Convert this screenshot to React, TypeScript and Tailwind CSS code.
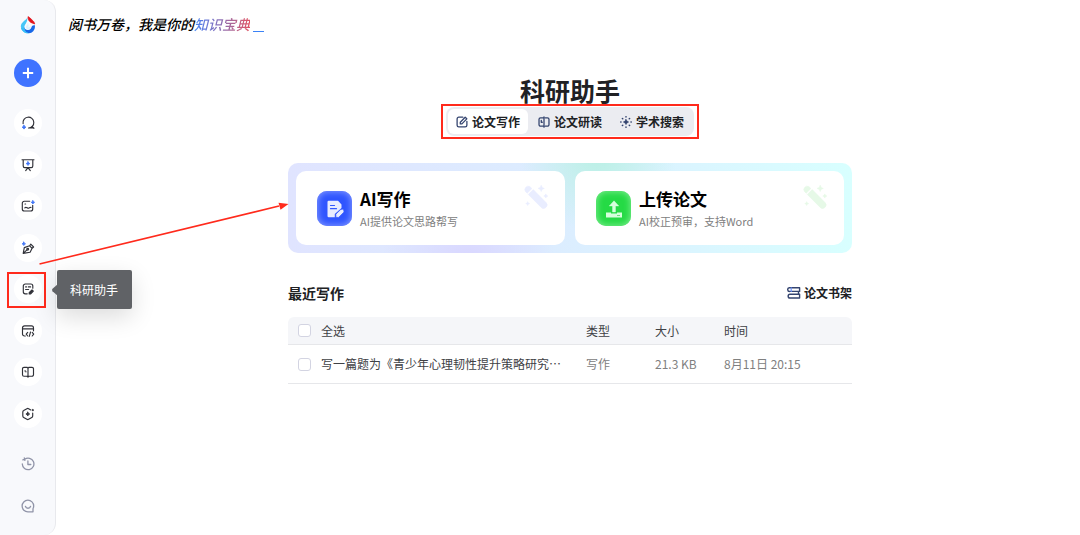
import type { ReactNode } from "react";

const ink = "#303138";
const blue = "#3f74f6";

function Svg({ children, className = "size-3.5", stroke = ink }: { children: ReactNode; className?: string; stroke?: string }) {
  return (
    <svg viewBox="0 0 14 14" className={className} fill="none" stroke={stroke} strokeWidth="1.15" strokeLinecap="round" strokeLinejoin="round" aria-hidden="true">
      {children}
    </svg>
  );
}

function Spark({ x, y, r, fill = blue }: { x: number; y: number; r: number; fill?: string }) {
  const k = r * 0.36;
  return (
    <path
      d={`M${x} ${y - r}L${x + k} ${y - k}L${x + r} ${y}L${x + k} ${y + k}L${x} ${y + r}L${x - k} ${y + k}L${x - r} ${y}L${x - k} ${y - k}Z`}
      fill={fill}
      stroke={fill}
      strokeWidth="0.8"
    />
  );
}

function Logo() {
  return (
    <svg viewBox="0 0 16 18" className="h-[18px] w-4" aria-hidden="true">
      <path d="M7.4 1.600C6.400 4.200.8 6.200.8 10.500a7 7 0 0 0 8.400 6.600C5.600 16.400 4.100 13.700 4.300 11.300 4.500 8.300 7.700 6.600 7.400 1.600Z" fill="#45c6f7" />
      <path d="M4 10.500C3.800 14.500 6.500 17.200 9 17.200a6.500 6.500 0 0 0 6-6.400c0-.8-.2-1.300-.4-1.900-.9.400-2.200.4-2.700 1.300-.8 2-1.600 3.900-4 3.900C5.700 14.100 4.200 12.600 4 10.500Z" fill="#1768e8" />
      <path d="M1 12c1 3.500 4.400 5.600 8 5.200-2.800-.5-4.500-2.200-4.800-5.700Z" fill="#38bdf8" />
      <path d="M8 .6c1.600.8 2.700 2 4 3.300C13.300 5 14.600 6.300 14.700 8c-1.400-.8-2.700-.8-3.900-1.600C8.900 5.300 7.900 3.200 8 .6Z" fill="#e3141d" stroke="#e3141d" strokeWidth=".7" />
      <path d="M7.700 6.800c.3 2.300-1.800 2.700-1.700 4.500 0 1.300.9 2 2 2 1.600 0 2.500-1.400 2.400-3.400-.7.700-1.200 1.300-2.100 1.400.5-1.500.3-3.300-.6-4.500Z" fill="#d7f1ff" />
    </svg>
  );
}

const navItems: { label: string; icon: ReactNode }[] = [
  {
    label: "AI搜索",
    icon: (
      <>
        <path d="M2.100 7.600A5.400 5.400 0 1 1 7.500 12H12.900M10.900 10.500 12.900 12.300" />
        <Spark x={3} y={11.200} r={1.900} />
      </>
    ),
  },
  {
    label: "AI PPT",
    icon: (
      <>
        <path d="M1 1.700H13M2.200 1.700V8a1.600 1.600 0 0 0 1.600 1.600H10.200A1.600 1.600 0 0 0 11.800 8V1.700M7 9.600 4.700 12.600M7 9.600 9.300 12.600" />
        <Spark x={7} y={5.600} r={1.900} />
      </>
    ),
  },
  {
    label: "AI绘图",
    icon: (
      <>
        <path d="M8.700 2.200H3.300A2 2 0 0 0 1.300 4.200V10a2 2 0 0 0 2 2H9.700a2 2 0 0 0 2-2V6.300M3.800 8.900C5.300 7.100 6.400 9.700 7.600 9.200 8.700 8.700 9.300 7.900 10 8.500M4 5H4.600" />
        <Spark x={11.900} y={3.300} r={1.700} />
      </>
    ),
  },
  {
    label: "AI写作",
    icon: (
      <>
        <path d="M2.200 12.400 3.300 6.600 8.600 4.800 11.100 7.300 9.100 11.200 2.200 12.400 6.200 8.700M8.600 4.800 9.800 3.200 12.600 6 11.100 7.300" />
        <circle cx="6.700" cy="8.300" r=".9" />
        <Spark x={2.800} y={2.800} r={1.700} />
      </>
    ),
  },
  {
    label: "科研助手",
    icon: (
      <>
        <path d="M6.200 11.800H4.300a2 2 0 0 1-2-2V4a2 2 0 0 1 2-2H9.800a2 2 0 0 1 2 2V6.200M4.600 4.900H5.500M7.300 4.900H9.600M4.600 7.500H7.600" />
        <path d="M8.200 12V10.600L11 7.800 12.300 9.100 9.500 12Z" fill={ink} />
      </>
    ),
  },
  {
    label: "AI编程",
    icon: (
      <path d="M4.300 12H3.500a2 2 0 0 1-2-2V3.900a2 2 0 0 1 2-2H10.500a2 2 0 0 1 2 2V6.800M1.700 4.900H12.300M6.700 8.400 5.200 10.200 6.700 12M9.500 8 8.300 12.300M11.200 8.400 12.700 10.200 11.200 12" />
    ),
  },
  {
    label: "AI阅读",
    icon: (
      <>
        <path d="M7 3.200 6 2.300H3A1.500 1.500 0 0 0 1.500 3.800V9.700A1.500 1.500 0 0 0 3 11.200H6L7 12.100 8 11.200H11A1.500 1.500 0 0 0 12.500 9.700V3.800A1.500 1.500 0 0 0 11 2.300H8L7 3.200V12.100" />
        <path d="M4.100 5.400V6.800H5.200" strokeWidth=".9" />
      </>
    ),
  },
  {
    label: "智能体",
    icon: (
      <>
        <path d="M9.800 3 7.600 1.700a1.700 1.700 0 0 0-1.700 0L2.700 3.500A1.700 1.700 0 0 0 1.800 5V9a1.700 1.700 0 0 0 .9 1.500L5.900 12.300a1.700 1.700 0 0 0 1.700 0L10.800 10.500A1.700 1.700 0 0 0 11.700 9V6" />
        <Spark x={6.800} y={7} r={1.900} fill={ink} />
        <Spark x={11.800} y={3.200} r={0.900} fill={ink} />
      </>
    ),
  },
];

function Sidebar() {
  return (
    <aside className="flex h-screen w-14 shrink-0 flex-col items-center rounded-r-xl border-r border-[#e8e9ed] bg-[#f8f9fc] pt-4">
      <Logo />
      <button aria-label="新建" className="mt-[25px] flex size-7 shrink-0 items-center justify-center rounded-full bg-[#3f73ff]">
        <svg viewBox="0 0 12 12" className="size-3" stroke="#fff" strokeWidth="2" aria-hidden="true">
          <path d="M6 .8V11.200M.8 6H11.200" />
        </svg>
      </button>
      <nav className="mt-[22px] flex h-[319px] shrink-0 flex-col justify-between">
        {navItems.map((item) => (
          <div key={item.label} className="relative">
            <button aria-label={item.label} className="flex size-7 items-center justify-center rounded-full bg-white">
              <Svg>{item.icon}</Svg>
            </button>
            {item.label === "科研助手" && (
              <>
                <div className="absolute -top-[3px] -left-[7px] z-10 h-9 w-[39px] border-2 border-[#ff2a1c]" />
                <div role="tooltip" className="absolute -top-[5px] left-[43px] z-10 flex h-[39px] w-[75px] items-center justify-center rounded-xs bg-[#606266] text-xs text-white shadow-[0_8px_24px_rgba(0,0,0,0.14)]">
                  <svg viewBox="0 0 6 12" className="absolute top-[14px] -left-[5px] h-3 w-[6px]" aria-hidden="true">
                    <path d="M6 0V12L.5 7.200Q-.3 6 .5 4.800Z" fill="#606266" />
                  </svg>
                  科研助手
                </div>
              </>
            )}
          </div>
        ))}
      </nav>
      <div className="mt-[29px] flex flex-col gap-7">
        <button aria-label="历史记录">
          <Svg stroke="#9094a8">
            <path d="M1.300 7A5.800 5.800 0 1 0 3.700 2.200L1.900 2.900M3.300.9 3.900 3.400M6.900 4V7.500H9.800" strokeWidth="1.300" />
          </Svg>
        </button>
        <button aria-label="反馈">
          <Svg stroke="#9094a8">
            <path d="M12.700 7A5.800 5.800 0 1 0 7 12.800H12V9.800A5.800 5.800 0 0 0 12.700 7ZM4.400 7.300A2.700 2.700 0 0 0 9.600 7.300" strokeWidth="1.300" />
          </Svg>
        </button>
      </div>
    </aside>
  );
}

const navy = "#34446f";

const tabs: { label: string; icon: ReactNode }[] = [
  {
    label: "论文写作",
    icon: <path d="M8 1.400H3.300a2 2 0 0 0-2 2V10.700a2 2 0 0 0 2 2H10.700a2 2 0 0 0 2-2V6.200M5 9.200V7.200L10.700 1.500 12.600 3.300 6.900 9.200Z" strokeWidth="1.500" />,
  },
  {
    label: "论文研读",
    icon: <path d="M7 1V13M6 2.100H3A1.800 1.800 0 0 0 1.200 3.900V10.100A1.800 1.800 0 0 0 3 11.900H6M8.500 2.100H11A1.800 1.800 0 0 1 12.800 3.900V10.100A1.800 1.800 0 0 1 11 11.900H8.500M3.800 5V7.300H5" strokeWidth="1.500" />,
  },
  {
    label: "学术搜索",
    icon: (
      <>
        <Spark x={7} y={7} r={3} fill={navy} />
        <path d="M7 .8V1.200M7 12.800V13.200M.8 7H1.200M12.800 7H13.200M2.800 2.800 3.200 3.200M10.800 10.800 11.200 11.200M11.200 2.800 10.800 3.200M3.200 10.800 2.800 11.200" strokeWidth="1.700" />
      </>
    ),
  },
];

function Wand({ className }: { className: string }) {
  return (
    <svg viewBox="0 0 24 24" className={className} fill="currentColor" aria-hidden="true">
      <path d="M1.200 6.200A3.500 3.500 0 0 1 5.800 1.500L7.900 3.500 3.200 8.200Z" stroke="currentColor" strokeWidth=".6" strokeLinejoin="round" />
      <path d="M4.300 9.500 9.200 4.600 22 17.500A3.400 3.400 0 0 1 17.200 22.400Z" stroke="currentColor" strokeWidth=".6" strokeLinejoin="round" />
      <path d="M17.200.2 18.200 2.400 20.400 3.400 18.200 4.400 17.200 6.600 16.200 4.400 14 3.400 16.200 2.400ZM21.800 8.900 22.500 10.300 23.900 11 22.500 11.700 21.800 13.100 21.100 11.700 19.700 11 21.100 10.300ZM3.700 16.600 4.300 18 5.700 18.600 4.300 19.200 3.700 20.600 3.100 19.200 1.700 18.600 3.100 18Z" stroke="currentColor" strokeWidth=".5" />
    </svg>
  );
}

function ActionCard({ title, text, icon, wand }: { title: string; text: string; icon: ReactNode; wand: string }) {
  return (
    <button className="flex h-[74px] flex-1 items-start rounded-[10px] bg-white pr-[17px] pl-[21px] text-left">
      {icon}
      <span className="mt-4 ml-2 flex flex-col">
        <span className="text-[17px] leading-6 font-bold text-black">{title}</span>
        <span className="mt-px text-[11px] leading-[18px] text-[#808080]">{text}</span>
      </span>
      <Wand className={wand} />
    </button>
  );
}

function WriteIcon() {
  return (
    <span className="mt-5 flex size-[35px] shrink-0 items-center justify-center rounded-[10px] bg-[#2f55ff] shadow-[inset_0_0_6px_1px_#8298ff]">
      <svg viewBox="0 0 18 18" className="size-[18px]" aria-hidden="true">
        <path d="M1.500 2A1.200 1.200 0 0 1 2.700.8H12L15.500 4.500V8L8.800 14V17.200H2.700A1.200 1.200 0 0 1 1.500 16Z" fill="#e8ecff" />
        <path d="M4.500 5.500H8.500M4.500 8.700H10.500" stroke="#3157ff" strokeWidth="1.200" strokeLinecap="round" />
        <path d="M9.800 17.400V14.200L14.600 9.600Q16.300 8.400 17.600 9.800 18.600 11.300 17.400 12.700L12.700 17.400Z" fill="#e8ecff" stroke="#3157ff" strokeWidth=".8" />
      </svg>
    </span>
  );
}

function UploadIcon() {
  return (
    <span className="mt-5 flex size-[35px] shrink-0 items-center justify-center rounded-[10px] bg-[#25da45] shadow-[inset_0_0_6px_1px_#79eb8c]">
      <svg viewBox="0 0 18 18" className="size-[18px]" fill="#d5ffdc" aria-hidden="true">
        <path d="M9 .8 13.800 6H10.500V12H7.500V6H4.200Z" stroke="#d5ffdc" strokeWidth=".4" strokeLinejoin="round" />
        <path d="M1 12.500H6V13.500H12V12.500H17V17.500H1Z" />
        <path d="M12 15.500H15" stroke="#6be27f" strokeWidth="1" />
      </svg>
    </span>
  );
}

const boxClass = "block size-[13px] appearance-none rounded-[3px] border border-[#d3d4e2] bg-white checked:bg-[#3f73ff]";

function FileTable() {
  return (
    <table className="mt-[14px] w-full table-fixed border-separate border-spacing-0 text-left text-xs">
      <colgroup>
        <col className="w-[33px]" />
        <col />
        <col className="w-[69px]" />
        <col className="w-[69px]" />
        <col className="w-32" />
      </colgroup>
      <thead>
        <tr className="h-7 text-[#404145] [&>th]:border-b [&>th]:border-[#e6e7ea] [&>th]:bg-[#f5f6f9] [&>th]:p-0 [&>th]:font-normal">
          <th className="rounded-tl-md">
            <input id="select-all" type="checkbox" className={`${boxClass} ml-[10px]`} />
          </th>
          <th>
            <label htmlFor="select-all">全选</label>
          </th>
          <th>类型</th>
          <th>大小</th>
          <th className="rounded-tr-md">时间</th>
        </tr>
      </thead>
      <tbody>
        <tr className="h-[39px] text-[#808080] [&>td]:border-b [&>td]:border-[#e6e7ea] [&>td]:p-0">
          <td>
            <input id="file-1" type="checkbox" className={`${boxClass} ml-[10px]`} />
          </td>
          <td className="whitespace-nowrap text-[#404145]">
            <label htmlFor="file-1">写一篇题为《青少年心理韧性提升策略研究…</label>
          </td>
          <td>写作</td>
          <td>21.3 KB</td>
          <td>8月11日 20:15</td>
        </tr>
      </tbody>
    </table>
  );
}

export default function App() {
  return (
    <div lang="zh-CN" className="relative flex min-h-screen bg-white font-['Noto_Sans_CJK_SC',sans-serif] text-[#202124]">
      <Sidebar />
      <main className="min-w-0 flex-1 pt-[14px]">
        <p className="pl-3 text-sm leading-5 font-medium text-black italic">
          阅书万卷，我是你的
          <span className="bg-linear-to-r from-[#3b82f6] via-[#8d6bb0] to-[#e05263] bg-clip-text text-transparent">知识宝典</span>
          <span className="ml-[3px] inline-block h-px w-[11px] bg-[#3b82f6] align-[-2px]" />
        </p>
        <div className="pl-1">
          <div className="mx-auto flex max-w-[564px] flex-col">
            <h1 className="mt-10 mb-px text-center text-[25px] leading-8 font-bold">科研助手</h1>
            <div className="relative flex gap-[2px] self-center rounded-lg bg-[#ebecf1] p-[2px]" role="tablist">
              {tabs.map((tab, i) => (
                <button
                  key={tab.label}
                  role="tab"
                  aria-selected={i === 0}
                  className={`flex h-[25px] items-center gap-1 rounded-md px-2 text-xs font-bold ${i === 0 ? "bg-white" : ""}`}
                >
                  <Svg className="size-3" stroke={navy}>{tab.icon}</Svg>
                  {tab.label}
                </button>
              ))}
              <div className="pointer-events-none absolute -inset-x-[5px] -inset-y-[3px] border-2 border-[#ff2a1c]" />
            </div>
            <section className="mt-[27px] flex gap-[10px] rounded-[10px] bg-[radial-gradient(circle_at_32%_110%,#d9d6ff_0%,#d9d6ff00_22%),radial-gradient(circle_at_55%_-10%,#b9f0e4_0%,#b9f0e400_24%),linear-gradient(90deg,#e0e4ff,#dcecff_45%,#d8ffff)] p-2">
              <ActionCard title="AI写作" text="AI提供论文思路帮写" icon={<WriteIcon />} wand="mt-[14px] ml-auto size-6 text-[#e9edff]" />
              <ActionCard title="上传论文" text="AI校正预审，支持Word" icon={<UploadIcon />} wand="mt-[14px] ml-auto size-6 text-[#e6f9e7]" />
            </section>
            <div className="mt-[30px] flex items-center justify-between">
              <h2 className="text-sm leading-5 font-bold">最近写作</h2>
              <a href="#shelf" className="flex items-center gap-[3px] text-xs leading-5 font-bold">
                <Svg className="size-3.5" stroke="#34446f">
                  <path d="M2.300 1.800H12.600V5.400H2.800A1.700 1.700 0 0 1 2.300 1.800ZM3 8.300H12.600V12H3A1.700 1.700 0 0 1 3 8.300ZM11.500 5.600V8.100" strokeWidth="1.400" />
                  <path d="M4.200 1.800V5.400" stroke="#6b93ff" />
                </Svg>
                论文书架
              </a>
            </div>
            <FileTable />
          </div>
        </div>
      </main>
      <svg viewBox="0 0 250 64" className="pointer-events-none absolute top-[201px] left-[39px] z-20 h-16 w-[250px]" aria-hidden="true">
        <path d="M.5 63 240 5" stroke="#ff2a1c" strokeWidth="1.600" />
        <path d="M249.500 3 239.500 1.700 241.500 8.700Z" fill="#ff2a1c" />
      </svg>
    </div>
  );
}
